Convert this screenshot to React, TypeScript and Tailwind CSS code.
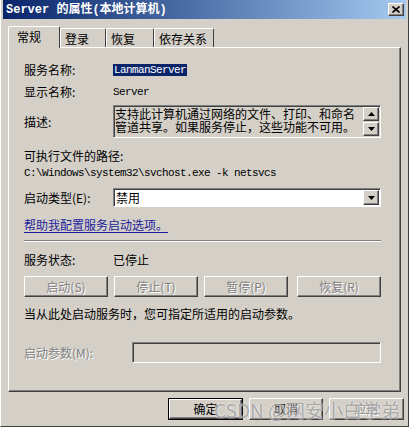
const cjk = { fontFamily: '"Noto Sans CJK SC", "Liberation Sans", sans-serif' }
const mono = { fontFamily: '"Liberation Mono", "Noto Sans CJK SC", monospace' }

const raised =
  "border border-t-white border-l-white border-r-[#404040] border-b-[#404040] shadow-[inset_-1px_-1px_0_#808080]"
const sunken =
  "border border-t-[#808080] border-l-[#808080] border-r-white border-b-white shadow-[inset_1px_1px_0_#404040]"

function Arrow({ up }: { up?: boolean }) {
  return (
    <svg width="7" height="4" viewBox="0 0 7 4">
      <path d={up ? "M3.5 0 L7 4 L0 4 Z" : "M0 0 L7 0 L3.5 4 Z"} fill="#000" />
    </svg>
  )
}

function Row({ label, children, h, className = "" }: { label: string; children?: React.ReactNode; h: string; className?: string }) {
  return (
    <div className={`flex items-center ${h} ${className}`}>
      <span className="w-[89px] shrink-0 text-[12px] leading-none">{label}</span>
      {children}
    </div>
  )
}

function DisabledText({ children }: { children: React.ReactNode }) {
  return <span className="text-[#808080] [text-shadow:1px_1px_0_#fff]">{children}</span>
}

const tabs = ["登录", "恢复", "依存关系"]
const actions = [
  { t: "启动(S)", w: "w-[84px]" },
  { t: "停止(T)", w: "w-[84px]" },
  { t: "暂停(P)", w: "w-[84px]" },
  { t: "恢复(R)", w: "w-[84px]" },
]

export default function App() {
  return (
    <div className="relative h-[429px] w-[411px] overflow-hidden bg-white" style={cjk}>
      <div className="h-[427px] w-[409px] border-l border-r border-b border-l-white border-r-[#404040] border-b-[#404040] bg-[#d4d0c8] pl-[2px] pr-[2px] text-black">
        {/* title bar */}
        <div className="flex h-[19px] items-center justify-between bg-gradient-to-r from-[#0a246a] to-[#a6caf0] pl-[3px] pr-[2px]">
          <span className="text-[12px] font-bold leading-none text-white" style={mono}>
            Server 的属性(本地计算机)
          </span>
          <div className={`flex h-[13px] w-[16px] items-center justify-center bg-[#d4d0c8] ${raised}`}>
            <svg width="8" height="7" viewBox="0 0 8 7">
              <path d="M0.5 0.5 L7.5 6.5 M7.5 0.5 L0.5 6.5" stroke="#000" strokeWidth="1.6" />
            </svg>
          </div>
        </div>

        {/* tabs */}
        <div className="ml-[5px] mt-[7px] flex h-[21px] items-end">
          <div className="relative z-10 -mb-px flex h-[22px] w-[52px] items-start rounded-t-[2px] border-l border-t border-r border-l-white border-t-white border-r-[#404040] bg-[#d4d0c8] pl-[8px] pt-[3px] text-[12px] leading-[14px]">
            常规
          </div>
          {tabs.map((t, i) => (
            <div
              key={t}
              className={`flex h-[19px] items-start rounded-t-[2px] border-t border-r border-l border-t-white border-l-white border-r-[#404040] pt-[3px] pl-[4px] text-[12px] leading-[14px] ${
                i === 0 ? "w-[46px]" : i === 1 ? "w-[48px]" : "w-[60px]"
              }`}
            >
              {t}
            </div>
          ))}
        </div>

        {/* panel */}
        <div className="ml-[5px] flex h-[345px] w-[393px] flex-col border border-t-white border-l-white border-r-[#404040] border-b-[#404040] pl-[15px] pr-[19px] shadow-[inset_-1px_-1px_0_#808080]">
          <Row label="服务名称:" h="h-[14px] mt-[15px]">
            <span className="bg-[#0a246a] px-px text-[11px] leading-[12px] tracking-[-0.6px] text-white" style={mono}>
              LanmanServer
            </span>
          </Row>
          <Row label="显示名称:" h="h-[14px] mt-[8px]">
            <span className="text-[11px] leading-none tracking-[-0.6px]" style={mono}>
              Server
            </span>
          </Row>
          <Row label="描述:" h="h-[33px] mt-[6px]">
            <div className={`flex h-[33px] flex-1 justify-between ${sunken}`}>
              <p className="pl-[1px] pt-[1px] text-[12px] leading-[13px]">
                支持此计算机通过网络的文件、打印、和命名
                <br />
                管道共享。如果服务停止，这些功能不可用。
              </p>
              <div className="flex flex-col gap-[1px] pr-[1px] pt-[1px]">
                <div className={`flex h-[14px] w-[16px] items-center justify-center ${raised}`}>
                  <Arrow up />
                </div>
                <div className={`flex h-[14px] w-[16px] items-center justify-center ${raised}`}>
                  <Arrow />
                </div>
              </div>
            </div>
          </Row>

          <p className="mt-[11px] text-[12px] leading-[14px]">可执行文件的路径:</p>
          <p className="mt-[4px] text-[11px] leading-[12px] tracking-[-0.6px]" style={mono}>
            C:\Windows\system32\svchost.exe -k netsvcs
          </p>

          <Row label="启动类型(E):" h="h-[19px] mt-[9px]">
            <div className={`flex h-[19px] flex-1 items-center justify-between bg-white pr-[1px] ${sunken}`}>
              <span className="pl-[2px] text-[12px] leading-none">禁用</span>
              <div className={`flex h-[15px] w-[16px] items-center justify-center bg-[#d4d0c8] ${raised}`}>
                <Arrow />
              </div>
            </div>
          </Row>

          <a className="mt-[11px] w-fit text-[12px] leading-[13px] text-[#1d1d9b] underline underline-offset-2">
            帮助我配置服务启动选项。
          </a>

          <div className="mt-[9px] h-[2px] border-t border-b border-t-[#808080] border-b-white" />

          <Row label="服务状态:" h="h-[14px] mt-[11px]">
            <span className="text-[12px] leading-none">已停止</span>
          </Row>

          <div className="mt-[9px] flex gap-[6px]">
            {actions.map((a, i) => (
              <div
                key={a.t}
                className={`flex h-[21px] ${a.w} ${i === 3 ? "ml-[3px] w-[83px]" : ""} items-center justify-center text-[12px] leading-none ${raised}`}
              >
                <DisabledText>{a.t}</DisabledText>
              </div>
            ))}
          </div>

          <p className="mt-[10px] text-[12px] leading-[14px]">当从此处启动服务时，您可指定所适用的启动参数。</p>

          <div className="mt-[21px] flex h-[21px] items-center">
            <span className="w-[108px] shrink-0 text-[12px] leading-none">
              <DisabledText>启动参数(M):</DisabledText>
            </span>
            <div className={`h-[21px] flex-1 ${sunken}`} />
          </div>
        </div>

        {/* dialog buttons */}
        <div className="relative mt-[6px] flex justify-end gap-[6px] pr-[2px]">
          <div className="flex h-[22px] w-[75px] items-center justify-center border border-black text-[12px] leading-none">
            <div className={`flex h-full w-full items-center justify-center ${raised}`}>确定</div>
          </div>
          <div className={`flex h-[22px] w-[74px] items-center justify-center text-[12px] leading-none ${raised}`}>取消</div>
          <div className={`flex h-[22px] w-[75px] items-center justify-center text-[12px] leading-none ${raised}`}>
            <DisabledText>应用</DisabledText>
          </div>
          <span className="pointer-events-none absolute right-[6px] top-[1px] text-[19px] leading-[22px] text-[#8a8a8a]/70 [text-shadow:0_0_2px_#fff]">
            CSDN @网安小白学弟
          </span>
        </div>
      </div>
    </div>
  )
}
